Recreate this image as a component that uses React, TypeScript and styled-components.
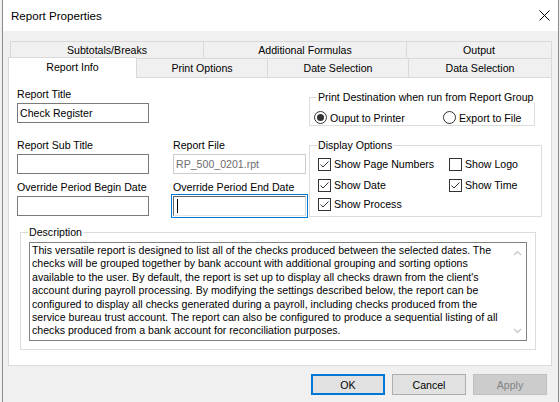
import React from "react";
import styled, { createGlobalStyle } from "styled-components";

const GlobalStyle = createGlobalStyle`
  html, body {
    margin: 0;
    padding: 0;
    background: #f0f0f0;
  }
  body {
    font-family: "Liberation Sans", Arial, sans-serif;
    font-size: 10.6px;
    color: #000;
  }
  * {
    box-sizing: border-box;
  }
`;

const Window = styled.div`
  width: 557px;
  height: 402px;
  margin-left: 2px;
  border-left: 1px solid #8c8c8c;
  border-right: 1px solid #8c8c8c;
  background: #f0f0f0;
  display: flex;
  flex-direction: column;
`;

const TitleBar = styled.div`
  height: 31px;
  background: #fff;
  display: flex;
  align-items: center;
  justify-content: space-between;
  padding: 0 8px 0 8px;
  font-size: 11.6px;
`;

const Body = styled.div`
  padding: 10px 6px 0 5px;
`;

const TabRow = styled.div<{ $indent?: number }>`
  display: flex;
  margin-left: ${({ $indent }) => $indent ?? 0}px;
`;

const BackTab = styled.div<{ $w: number; $last?: boolean }>`
  width: ${({ $w }) => $w}px;
  height: 17px;
  line-height: 16px;
  text-align: center;
  background: #f0f0f0;
  border-top: 1px solid #d9d9d9;
  border-left: 1px solid #d9d9d9;
  border-right: ${({ $last }) => ($last ? "1px solid #d9d9d9" : "none")};
`;

const FrontTab = styled.div<{ $w: number }>`
  width: ${({ $w }) => $w}px;
  height: 19px;
  line-height: 18px;
  text-align: center;
  background: #f0f0f0;
  border-top: 1px solid #d9d9d9;
  border-right: 1px solid #d9d9d9;
`;

const ActiveTab = styled.div<{ $w: number }>`
  position: relative;
  z-index: 1;
  width: ${({ $w }) => $w}px;
  height: 21px;
  margin: -1px 0 -1px 0;
  line-height: 19px;
  text-align: center;
  background: #fff;
  border: 1px solid #d9d9d9;
  border-bottom: none;
`;

const Panel = styled.div`
  height: 289px;
  background: #fff;
  border: 1px solid #d9d9d9;
  padding: 10px 8px 0 8px;
`;

const TopRow = styled.div`
  display: flex;
  align-items: flex-start;
`;

const MidRow = styled.div`
  display: flex;
  align-items: flex-start;
  margin-top: 13px;
`;

const FieldGrid = styled.div`
  display: grid;
  grid-template-columns: 132px 133px;
  column-gap: 24px;
  row-gap: 7px;
`;

const Field = styled.div<{ $w?: number }>`
  display: flex;
  flex-direction: column;
  gap: 2px;
  width: ${({ $w }) => ($w ? `${$w}px` : "auto")};
`;

const Label = styled.div`
  line-height: 13px;
  white-space: nowrap;
`;

type BoxState = "normal" | "disabled" | "focused";

const TextBox = styled.div<{ $state?: BoxState }>`
  height: 20px;
  line-height: 18px;
  padding-left: 2px;
  background: #fff;
  white-space: nowrap;
  overflow: hidden;
  border: 1px solid
    ${({ $state }) => ($state === "disabled" ? "#cccccc" : "#7a7a7a")};
  color: ${({ $state }) => ($state === "disabled" ? "#6d6d6d" : "#000")};
  ${({ $state }) =>
    $state === "focused"
      ? `
    border-color: #646464 #d4d4d4 #e3e3e3 #646464;
    outline: 1px solid #0078d7;
    outline-offset: 1px;
  `
      : ""}
`;

const Caret = styled.span`
  display: inline-block;
  width: 1px;
  height: 14px;
  margin-top: 2px;
  margin-left: 1px;
  background: #000;
  vertical-align: top;
`;

const Group = styled.fieldset<{ $w: number; $pad: number; $left?: number; $top?: number }>`
  width: ${({ $w }) => $w}px;
  margin: ${({ $top }) => $top ?? 0}px 0 0 ${({ $left }) => $left ?? 0}px;
  padding: 0 0 0 ${({ $pad }) => $pad}px;
  border: 1px solid #dcdcdc;
  min-width: 0;
`;

const Legend = styled.legend<{ $shift?: number }>`
  padding: 0 1px;
  margin-left: ${({ $shift }) => $shift ?? -1}px;
  line-height: 12px;
  white-space: nowrap;
`;

const RadioRow = styled.div`
  display: flex;
  margin-top: 8px;
  margin-bottom: 1px;
`;

const RadioItem = styled.label<{ $w?: number }>`
  display: flex;
  align-items: center;
  gap: 3px;
  height: 13px;
  width: ${({ $w }) => ($w ? `${$w}px` : "auto")};
  white-space: nowrap;
`;

const RadioCircle = styled.span<{ $on?: boolean }>`
  width: 13px;
  height: 13px;
  border-radius: 50%;
  border: 1px solid #333;
  display: flex;
  align-items: center;
  justify-content: center;
  &::after {
    content: "";
    width: 7px;
    height: 7px;
    border-radius: 50%;
    background: ${({ $on }) => ($on ? "#333" : "transparent")};
  }
`;

const CheckGrid = styled.div`
  display: grid;
  grid-template-columns: 131px auto;
  grid-template-rows: 21px 19px 13px;
  margin-top: 7px;
  padding-bottom: 5px;
`;

const CheckItem = styled.label`
  display: flex;
  align-items: flex-start;
  gap: 3px;
  line-height: 13px;
  white-space: nowrap;
`;

const CheckBox = styled.span`
  width: 13px;
  height: 13px;
  border: 1px solid #333;
  display: flex;
  align-items: center;
  justify-content: center;
  background: #fff;
  flex-shrink: 0;
`;

const DescGroup = styled.fieldset`
  width: 516px;
  margin: 9px 0 0 3px;
  padding: 0 8px 8px 8px;
  border: 1px solid #dcdcdc;
  min-width: 0;
`;

const DescBox = styled.div`
  height: 99px;
  margin-top: 4px;
  border: 1px solid #828282;
  display: flex;
  background: #fff;
`;

const DescText = styled.div`
  flex: 1;
  padding: 1px 0 0 2px;
  line-height: 13.4px;
  white-space: pre;
  overflow: hidden;
`;

const ScrollCol = styled.div`
  width: 17px;
  display: flex;
  flex-direction: column;
  justify-content: space-between;
  align-items: center;
  padding: 7px 0 6px 0;
`;

const Footer = styled.div`
  display: flex;
  justify-content: flex-end;
  gap: 7px;
  padding: 8px 5px 0 0;
`;

type ButtonKind = "default" | "normal" | "disabled";

const Button = styled.button<{ $kind: ButtonKind }>`
  width: 74px;
  height: 21px;
  padding: 0;
  font-family: "Liberation Sans", Arial, sans-serif;
  font-size: 10.6px;
  background: ${({ $kind }) => ($kind === "disabled" ? "#cccccc" : "#e1e1e1")};
  color: ${({ $kind }) => ($kind === "disabled" ? "#838383" : "#000")};
  border: ${({ $kind }) =>
    $kind === "default"
      ? "2px solid #0078d7"
      : $kind === "disabled"
      ? "1px solid #bfbfbf"
      : "1px solid #adadad"};
`;

const Check = () => (
  <svg width="11" height="11" viewBox="0 0 11 11">
    <polyline points="1.5,5.5 4,8 9.5,2.5" fill="none" stroke="#333" strokeWidth="1" />
  </svg>
);

const Chevron = ({ up }: { up?: boolean }) => (
  <svg width="9" height="6" viewBox="0 0 9 6">
    <polyline
      points={up ? "1,5 4.5,1.5 8,5" : "1,1 4.5,4.5 8,1"}
      fill="none"
      stroke="#c4c4c4"
      strokeWidth="1.2"
    />
  </svg>
);

const description = [
  "This versatile report is designed to list all of the checks produced between the selected dates. The",
  "checks will be grouped together by bank account with additional grouping and sorting options",
  "available to the user. By default, the report is set up to display all checks drawn from the client's",
  "account during payroll processing. By modifying the settings described below, the report can be",
  "configured to display all checks generated during a payroll, including checks produced from the",
  "service bureau trust account. The report can also be configured to produce a sequential listing of all",
  "checks produced from a bank account for reconciliation purposes.",
].join("\n");

const checks = [
  { label: "Show Page Numbers", on: true },
  { label: "Show Logo", on: false },
  { label: "Show Date", on: true },
  { label: "Show Time", on: true },
  { label: "Show Process", on: true },
];

const App = () => {
  return (
    <>
      <GlobalStyle />
      <Window>
        <TitleBar>
          <span>Report Properties</span>
          <svg width="11" height="11" viewBox="0 0 11 11">
            <path d="M0.5 0.5 L10.5 10.5 M10.5 0.5 L0.5 10.5" stroke="#000" strokeWidth="1" />
          </svg>
        </TitleBar>
        <Body>
          <TabRow $indent={2}>
            <BackTab $w={193}>Subtotals/Breaks</BackTab>
            <BackTab $w={203}>Additional Formulas</BackTab>
            <BackTab $w={146} $last>
              Output
            </BackTab>
          </TabRow>
          <TabRow>
            <ActiveTab $w={129}>Report Info</ActiveTab>
            <FrontTab $w={131}>Print Options</FrontTab>
            <FrontTab $w={141}>Date Selection</FrontTab>
            <FrontTab $w={143}>Data Selection</FrontTab>
          </TabRow>
          <Panel>
            <TopRow>
              <Field $w={132}>
                <Label>Report Title</Label>
                <TextBox>Check Register</TextBox>
              </Field>
              <Group $w={226} $pad={4} $left={160} $top={3}>
                <Legend $shift={3}>Print Destination when run from Report Group</Legend>
                <RadioRow>
                  <RadioItem $w={129}>
                    <RadioCircle $on />
                    Ouput to Printer
                  </RadioItem>
                  <RadioItem>
                    <RadioCircle />
                    Export to File
                  </RadioItem>
                </RadioRow>
              </Group>
            </TopRow>
            <MidRow>
              <FieldGrid>
                <Field>
                  <Label>Report Sub Title</Label>
                  <TextBox />
                </Field>
                <Field>
                  <Label>Report File</Label>
                  <TextBox $state="disabled">RP_500_0201.rpt</TextBox>
                </Field>
                <Field>
                  <Label>Override Period Begin Date</Label>
                  <TextBox />
                </Field>
                <Field>
                  <Label>Override Period End Date</Label>
                  <TextBox $state="focused">
                    <Caret />
                  </TextBox>
                </Field>
              </FieldGrid>
              <Group $w={233} $pad={8} $left={3}>
                <Legend>Display Options</Legend>
                <CheckGrid>
                  {checks.map((c) => (
                    <CheckItem key={c.label}>
                      <CheckBox>{c.on && <Check />}</CheckBox>
                      {c.label}
                    </CheckItem>
                  ))}
                </CheckGrid>
              </Group>
            </MidRow>
            <DescGroup>
              <Legend>Description</Legend>
              <DescBox>
                <DescText>{description}</DescText>
                <ScrollCol>
                  <Chevron up />
                  <Chevron />
                </ScrollCol>
              </DescBox>
            </DescGroup>
          </Panel>
          <Footer>
            <Button $kind="default">OK</Button>
            <Button $kind="normal">Cancel</Button>
            <Button $kind="disabled">Apply</Button>
          </Footer>
        </Body>
      </Window>
    </>
  );
};

export default App;
